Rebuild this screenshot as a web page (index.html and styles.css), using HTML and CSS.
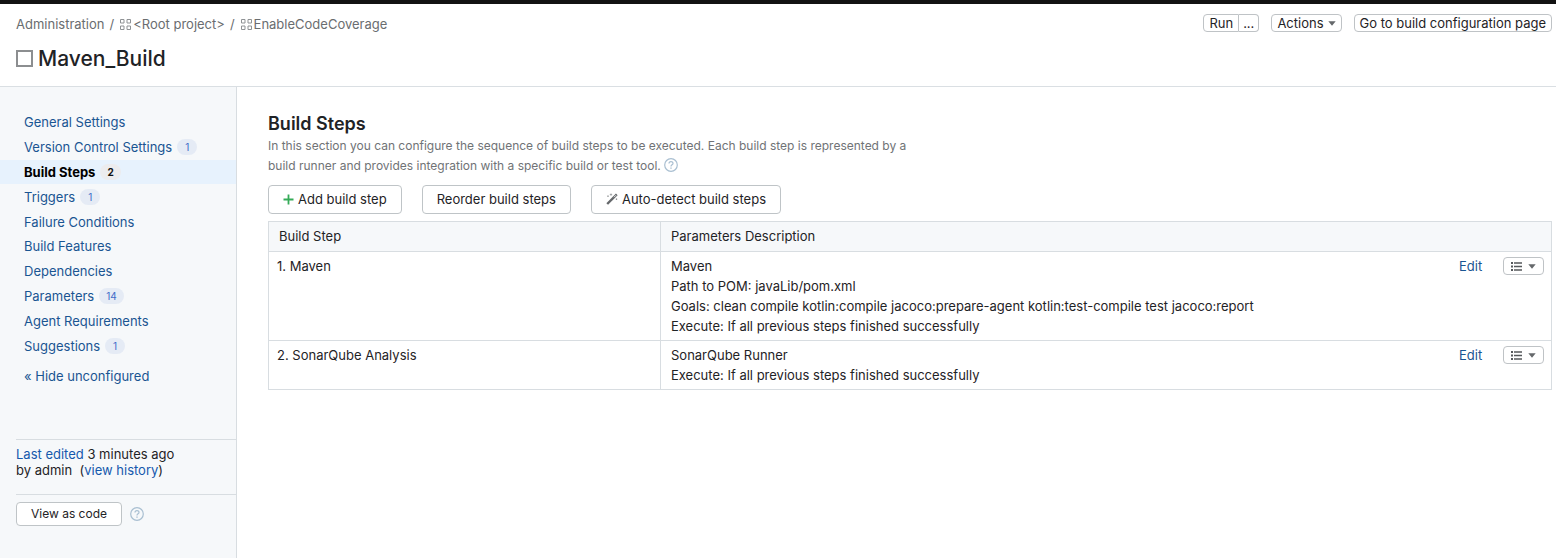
FILE: index.html
```html
<!DOCTYPE html>
<html lang="en">
<head>
<meta charset="utf-8">
<title>Maven_Build - Build Steps</title>
<meta name="viewport" content="width=device-width, initial-scale=1">
<link rel="stylesheet" href="styles.css">
</head>
<body>
<svg class="defs" aria-hidden="true">
  <symbol id="project" viewBox="0 0 11 11"><path d="M.5 .5h3.500v3.500h-3.500zM7 .5h3.500v3.500h-3.500zM.5 7h3.500v3.500h-3.500zM7 7h3.500v3.500h-3.500z" fill="none" stroke="currentColor"/></symbol>
  <symbol id="help" viewBox="0 0 14 14"><circle cx="7" cy="7" r="6.300" fill="none" stroke="currentColor" stroke-width="1.200"/><path d="M5 5.600c0-2.600 4-2.600 4-.2 0 1.400-2 1.500-2 3" fill="none" stroke="currentColor" stroke-width="1.200"/><path d="M6.300 9.500h1.400v1.300H6.300z" fill="currentColor"/></symbol>
  <symbol id="caret" viewBox="0 0 8 5"><path d="M.3 .2h7.400L4 4.800z" fill="currentColor"/></symbol>
  <symbol id="list" viewBox="0 0 11 9"><path d="M0 0h2v2H0zM0 3.500h2v2H0zM0 7h2v2H0zM3 .2h8v1.600H3zM3 3.700h8v1.600H3zM3 7.200h8v1.600H3z" fill="currentColor"/></symbol>
</svg>
<header class="header">
  <div>
    <nav class="crumbs" aria-label="Breadcrumbs">
      <a href="#">Administration</a><span class="slash">/</span>
      <a href="#"><svg class="project-icon"><use href="#project"/></svg>&lt;Root project&gt;</a><span class="slash">/</span>
      <a href="#"><svg class="project-icon"><use href="#project"/></svg>EnableCodeCoverage</a>
    </nav>
    <h1 class="title"><span class="title-box"></span>Maven_Build</h1>
  </div>
  <div class="actions">
    <div class="split"><button class="btn-small" type="button">Run</button><button class="btn-small more" type="button" aria-label="Run options">...</button></div>
    <button class="btn-small" type="button">Actions<svg class="caret"><use href="#caret"/></svg></button>
    <button class="btn-small" type="button">Go to build configuration page</button>
  </div>
</header>
<div class="layout">
  <aside class="sidebar">
    <ul class="menu">
      <li><a href="#">General Settings</a></li>
      <li><a href="#">Version Control Settings</a><span class="badge">1</span></li>
      <li class="current"><a href="#">Build Steps</a><span class="badge">2</span></li>
      <li><a href="#">Triggers</a><span class="badge">1</span></li>
      <li><a href="#">Failure Conditions</a></li>
      <li><a href="#">Build Features</a></li>
      <li><a href="#">Dependencies</a></li>
      <li><a href="#">Parameters</a><span class="badge">14</span></li>
      <li><a href="#">Agent Requirements</a></li>
      <li><a href="#">Suggestions</a><span class="badge">1</span></li>
    </ul>
    <a class="hide-link" href="#">« Hide unconfigured</a>
    <div class="edited"><a href="#">Last edited</a> 3 minutes ago<br>by admin&nbsp; (<a href="#">view history</a>)</div>
    <div class="code-row">
      <button class="btn btn-code" type="button">View as code</button>
      <a class="help-link" href="#" aria-label="Help"><svg class="help"><use href="#help"/></svg></a>
    </div>
  </aside>
  <main class="main">
    <h2 class="heading">Build Steps</h2>
    <p class="intro">In this section you can configure the sequence of build steps to be executed. Each build step is represented by a build runner and provides integration with a specific build or test tool. <a class="help-link" href="#" aria-label="Help"><svg class="help"><use href="#help"/></svg></a></p>
    <div class="toolbar">
      <button class="btn" type="button"><svg class="plus" viewBox="0 0 11 11"><path d="M5.500 .5v10M.5 5.500h10" stroke="currentColor" stroke-width="1.800"/></svg>Add build step</button>
      <button class="btn" type="button">Reorder build steps</button>
      <button class="btn" type="button"><svg class="wand" viewBox="0 0 12 12"><path d="M1.200 11L10.800 1.400" stroke="currentColor" stroke-width="2.400"/><path d="M8 4.200l2-2" stroke="#fff" stroke-width=".8"/><path d="M5 .4v2.400M3.800 1.600h2.400M2 2.400v1.600M1.200 3.200h1.600M10.500 5.400v1.600M9.700 6.200h1.600" stroke="currentColor" stroke-width=".5"/></svg>Auto-detect build steps</button>
    </div>
    <table class="steps">
      <thead><tr><th class="name">Build Step</th><th colspan="3">Parameters Description</th></tr></thead>
      <tbody>
        <tr>
          <td>1. Maven</td>
          <td class="params">Maven<br>Path to POM: javaLib/pom.xml<br>Goals: clean compile kotlin:compile jacoco:prepare-agent kotlin:test-compile test jacoco:report<br>Execute: If all previous steps finished successfully</td>
          <td class="edit"><a href="#">Edit</a></td>
          <td class="more-cell"><button class="btn-small row-menu" type="button" aria-label="Step actions"><svg class="list"><use href="#list"/></svg><svg class="caret"><use href="#caret"/></svg></button></td>
        </tr>
        <tr>
          <td>2. SonarQube Analysis</td>
          <td class="params">SonarQube Runner<br>Execute: If all previous steps finished successfully</td>
          <td class="edit"><a href="#">Edit</a></td>
          <td class="more-cell"><button class="btn-small row-menu" type="button" aria-label="Step actions"><svg class="list"><use href="#list"/></svg><svg class="caret"><use href="#caret"/></svg></button></td>
        </tr>
      </tbody>
    </table>
  </main>
</div>
</body>
</html>
```
FILE: styles.css
```css
* { box-sizing: border-box; }
body {
  margin: 0;
  min-height: 100vh;
  display: flex;
  flex-direction: column;
  border-top: 4px solid #121212;
  background: #fff;
  color: #1f2326;
  font: 13px/20px Inter, "Liberation Sans", sans-serif;
}
a { color: #1a5592; text-decoration: none; }
svg { flex: none; }
button { font: inherit; color: inherit; cursor: pointer; }
.defs { display: none; }

.header {
  display: flex;
  justify-content: space-between;
  align-items: flex-start;
  padding: 10px 4px 13px 16px;
  border-bottom: 1px solid #dadfe3;
}
.crumbs { display: flex; align-items: center; color: #6a6d70; }
.crumbs a { display: flex; align-items: center; gap: 2px; color: inherit; }
.slash { margin: 0 6px 0 5px; }
.project-icon { width: 11px; height: 11px; color: #8f9295; }
.title {
  display: flex;
  align-items: center;
  gap: 5px;
  margin: 10px 0 0;
  font-size: 21px;
  line-height: 29px;
  font-weight: 500;
}
.title-box { width: 17px; height: 17px; border: 2px solid #8c8e90; }

.actions { display: flex; gap: 12px; }
.split { display: flex; }
.btn-small {
  display: flex;
  align-items: center;
  gap: 4px;
  height: 18px;
  padding: 0 5px;
  border: 1px solid #bfc3c6;
  border-radius: 4px;
  background: #fff;
  line-height: 16px;
}
.split .btn-small { border-radius: 4px 0 0 4px; }
.split .more { padding: 0 4px; border-left: 0; border-radius: 0 4px 4px 0; }
.caret { width: 8px; height: 5px; color: #65686b; }

.layout { flex: 1; display: flex; }
.sidebar {
  flex: none;
  width: 237px;
  padding-top: 23px;
  border-right: 1px solid #d8dde1;
  background: #f6f8fa;
}
.menu {
  display: grid;
  grid-auto-rows: 1fr;
  min-height: 248px;
  margin: 0;
  padding: 0;
  list-style: none;
}
.menu li { display: flex; align-items: center; gap: 5px; padding-left: 24px; }
.menu .current { background: #e7f2fd; font-weight: 700; }
.menu .current a { color: #000; }
.badge {
  min-width: 20px;
  padding: 0 7px;
  border-radius: 8px;
  background: #e5ebf5;
  color: #426bc9;
  font-size: 10px;
  line-height: 16px;
  text-align: center;
}
.current .badge { background: #ececee; color: #111; }
.hide-link { display: block; margin: 8px 0 0 24px; }
.edited {
  margin: 53px 0 0 16px;
  padding: 6px 0 16px;
  border-top: 1px solid #d8dde1;
  border-bottom: 1px solid #d8dde1;
  line-height: 16px;
}
.edited a { color: #1559ad; }
.code-row { display: flex; align-items: center; gap: 8px; padding: 7px 0 0 16px; }
.help-link { display: inline-block; }
.help { display: block; width: 14px; height: 14px; color: #a9bfd1; }

.main { flex: 1; min-width: 0; padding: 25px 4px 24px 31px; }
.heading { margin: 0; font-size: 18px; line-height: 24px; font-weight: 600; }
.intro { max-width: 640px; margin: 0 0 9px; color: #707376; font-size: 12px; }
.intro .help-link { vertical-align: -2px; }
.toolbar { display: flex; flex-wrap: wrap; gap: 20px; margin-bottom: 7px; }
.btn {
  display: flex;
  align-items: center;
  gap: 4px;
  height: 29px;
  padding: 0 14px 1px;
  border: 1px solid #bfc4c7;
  border-radius: 4px;
  background: #fff;
}
.btn-code { height: 24px; padding-bottom: 0; font-size: 12px; }
.plus { width: 11px; height: 11px; color: #35ab58; }
.wand { width: 12px; height: 12px; color: #65686b; }

.steps { width: 100%; border-collapse: collapse; border: 1px solid #d8dde1; }
.steps tr { border-bottom: 1px solid #d8dde1; }
.steps th, .steps td { padding: 4px 10px; text-align: left; vertical-align: top; font-weight: 400; }
.steps th { padding-bottom: 5px; background: #f6f8fa; }
.steps td:first-child { padding-left: 8px; }
.steps th + th, .steps .params { border-left: 1px solid #d8dde1; }
.steps .name { width: 392px; }
.steps .edit { width: 44px; }
.steps .more-cell { width: 58px; padding: 5px 7px 0 10px; }
.row-menu { gap: 6px; padding: 0 7px; }
.list { width: 11px; height: 9px; color: #55585b; }
```
